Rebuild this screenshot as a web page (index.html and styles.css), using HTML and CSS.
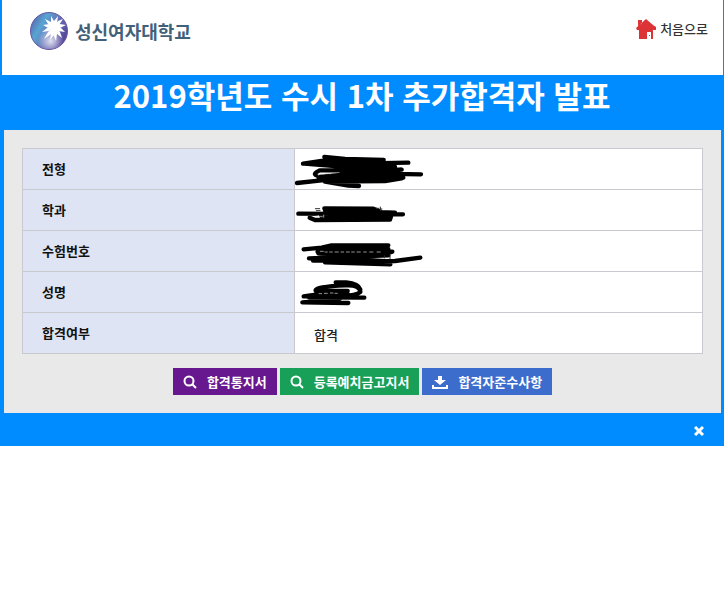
FILE: index.html
```html
<!DOCTYPE html>
<html lang="ko">

<head>
    <meta charset="UTF-8">
    <meta name="viewport" content="width=device-width, initial-scale=1.0">
    <title>2019학년도 수시 1차 추가합격자 발표</title>
    <link rel="stylesheet" href="styles.css">
</head>

<body>
    <div class="popup">
        <header class="header">
            <a href="#" class="logo">
                <svg class="logo-mark" viewBox="0 0 38 38" aria-hidden="true">
                    <defs>
                        <linearGradient id="ball" x1="0" y1="0.1" x2="1" y2="0.7">
                            <stop offset="0" stop-color="#5a58a8" />
                            <stop offset="0.32" stop-color="#58a5d2" />
                            <stop offset="0.6" stop-color="#6870b7" />
                            <stop offset="1" stop-color="#514096" />
                        </linearGradient>
                        <radialGradient id="shine" cx="0.55" cy="0.78" r="0.36">
                            <stop offset="0" stop-color="#fff" stop-opacity="0.8" />
                            <stop offset="1" stop-color="#fff" stop-opacity="0" />
                        </radialGradient>
                    </defs>
                    <circle cx="19" cy="19" r="18.5" fill="url(#ball)" stroke="#6455a0" />
                    <circle cx="19" cy="19" r="18" fill="url(#shine)" />
                    <path fill="#fff" d="M24 15l-3-5 0-6 3 5zM24 15l0-6 4-5-1 7zM24 15l4-6 5-2-4 6zM24 15l6-3 6 1-6 3zM24 15l7 1 4 4-7-1zM24 15l6 5 2 6-6-5zM24 15l3 7-1 7-3-7zM24 15l0 8-4 5 1-7zM24 15l-3 7-7 5 4-7zM24 15l-5 4-7 1 5-4zM24 15l-6 1-5-3 6-1zM24 15l-6-3-3-5 6 3z" />
                </svg>
                <span class="logo-text">성신여자대학교</span>
            </a>
            <a href="#" class="home">
                <svg class="home-icon" viewBox="0 0 20 20" aria-hidden="true">
                    <path fill="#dc3436" d="M10 0L0 9l1 2h2v9h8v-7h4v7h2v-9h3V8l-3-2-7-6zM2 1h4v3L2 7z" />
                    <path fill="#dc3436" d="M13 16h1v1h-1z" />
                </svg>
                <span>처음으로</span>
            </a>
        </header>

        <h1 class="title">2019학년도 수시 1차 추가합격자 발표</h1>

        <main class="panel">
            <table class="result">
                <tbody>
                    <tr>
                        <th scope="row">전형</th>
                        <td>
                            <svg class="mask" viewBox="30 12 450 123" aria-hidden="true">
                                <path d="M118 36L180 42L296 45M54 56L110 48L210 56L370 53M58 56L160 64L330 66M92 90Q84 86 104 76L350 74L100 96L355 98L170 84L408 88M36 114L130 104L240 96L350 100L300 108L120 110L190 122L222 123M140 112L310 102" />
                                <path class="gap" d="M100 90l6-3M110 87h8M122 86h6M132 86h5" />
                            </svg>
                        </td>
                    </tr>
                    <tr>
                        <th scope="row">학과</th>
                        <td>
                            <svg class="mask" viewBox="30 135 450 123" aria-hidden="true">
                                <path d="M118 190L265 191L285 199L120 196L330 203M40 206L354 208M74 218L90 225L315 224L318 214L110 214" />
                                <path class="trace" d="M91 191h13M94 197h11M274 190h7M286 186v11M286 192h5" />
                                <path class="gap" d="M92 214l9-2M106 215h6M116 210v7" />
                            </svg>
                        </td>
                    </tr>
                    <tr>
                        <th scope="row">수험번호</th>
                        <td>
                            <svg class="mask" viewBox="30 9 450 123" aria-hidden="true">
                                <path d="M56 64L110 59L140 52L310 52L130 60L310 63M98 72L110 66L322 71L300 78L100 76L310 82L72 91L210 90L84 98L230 96L120 103L316 109L290 100L330 99L406 89M220 94L310 100" />
                                <path class="gap" d="M106 70h9M120 72h7M134 72h8M150 72h10M168 72h8M184 72h9M200 72h8M216 72h10M236 72h8M254 72h10M276 72h10" />
                                <path class="trace" d="M298 84v6M315 82v10" />
                            </svg>
                        </td>
                    </tr>
                    <tr>
                        <th scope="row">성명</th>
                        <td>
                            <svg class="mask" viewBox="30 132 450 123" aria-hidden="true">
                                <path d="M92 188Q88 176 182 172Q226 170 226 192Q216 202 170 204L72 208L238 209M152 163L184 163Q220 166 226 184M92 188L188 189L76 202L56 205L188 198L160 214L52 223L190 225" />
                                <path class="gap" d="M102 197h8M118 196h9M136 195h8M150 196h7" />
                            </svg>
                        </td>
                    </tr>
                    <tr>
                        <th scope="row">합격여부</th>
                        <td>합격</td>
                    </tr>
                </tbody>
            </table>

            <div class="buttons">
                <button type="button" class="btn notice">
                    <svg class="btn-icon" viewBox="0 0 14 14" aria-hidden="true">
                        <circle cx="6" cy="6" r="4.5" />
                        <path d="M9 9l4 4" />
                    </svg>
                    합격통지서
                </button>
                <button type="button" class="btn bill">
                    <svg class="btn-icon" viewBox="0 0 14 14" aria-hidden="true">
                        <circle cx="6" cy="6" r="4.5" />
                        <path d="M9 9l4 4" />
                    </svg>
                    등록예치금고지서
                </button>
                <button type="button" class="btn guide">
                    <svg class="btn-icon wide" viewBox="0 0 16 14" aria-hidden="true">
                        <path class="solid" d="M6 1h4v4h4L8 10 2 5h4zM0 10h2v2h12v-2h2v4H0z" />
                    </svg>
                    합격자준수사항
                </button>
            </div>
        </main>

        <footer class="footer">
            <button type="button" class="close" aria-label="닫기">
                <svg class="close-icon" viewBox="0 0 10 10" aria-hidden="true">
                    <path d="M1 1l8 8M9 1L1 9" />
                </svg>
            </button>
        </footer>
    </div>
</body>

</html>
```

FILE: styles.css
```css
* {
    box-sizing: border-box;
}

body {
    margin: 0;
    background-color: #fff;
    font-family: "Noto Sans CJK KR", "Noto Sans", sans-serif;
    font-size: 13px;
    line-height: 20px;
}

.popup {
    background-color: #008cff;
}

.header {
    display: flex;
    justify-content: space-between;
    align-items: flex-start;
    height: 75px;
    margin: 0 1px 0 2px;
    padding: 12px 15px 0 28px;
    background-color: #fff;
}

.logo,
.home {
    display: flex;
    align-items: center;
    text-decoration: none;
}

.logo {
    gap: 7px;
    color: #426078;
    font-size: 18px;
    font-weight: bold;
}

.logo-mark {
    width: 38px;
    height: 38px;
}

.home {
    gap: 4px;
    padding-top: 7px;
    color: #333;
    font-weight: 500;
}

.home-icon {
    width: 20px;
    height: 20px;
}

.title {
    margin: 0;
    padding-bottom: 15px;
    color: #fff;
    font-size: 31px;
    font-weight: bold;
    line-height: 40px;
    text-align: center;
}

.panel {
    margin: 0 3px 0 4px;
    padding: 18px;
    background-color: #e9e9e9;
}

.result {
    width: 100%;
    border: 1px solid #b4b4bf;
    border-collapse: collapse;
    background-color: #fff;
}

.result th,
.result td {
    height: 41px;
    padding: 0 19px;
    border: 1px solid #c9cacf;
    text-align: left;
}

.result th {
    width: 40%;
    background-color: #dee4f3;
    color: #111;
    font-weight: bold;
}

.result td {
    position: relative;
    padding-top: 4px;
    color: #222;
    font-weight: 500;
}

/* pen strokes over the personal data */
.mask {
    position: absolute;
    top: 0;
    left: 0;
    width: 150px;
    height: 41px;
    overflow: visible;
    fill: none;
    stroke: #000;
    stroke-width: 13;
    stroke-linecap: round;
    stroke-linejoin: round;
}

.mask .gap {
    stroke: #ddd;
    stroke-width: 2;
}

.mask .trace {
    stroke: #333;
    stroke-width: 3;
}

.buttons {
    display: flex;
    justify-content: center;
    gap: 3px;
    margin-top: 14px;
}

.btn {
    display: flex;
    align-items: center;
    gap: 10px;
    height: 27px;
    padding: 0 10px;
    border: 0;
    color: #fff;
    font-family: inherit;
    font-size: 13px;
    font-weight: bold;
    cursor: pointer;
}

.notice {
    background-color: #67188f;
}

.bill {
    background-color: #18a058;
}

.guide {
    background-color: #3d6dcc;
}

.btn-icon {
    width: 14px;
    height: 14px;
    fill: none;
    stroke: #fff;
    stroke-width: 2;
}

.btn-icon.wide {
    width: 16px;
}

.btn-icon .solid {
    fill: #fff;
    stroke: none;
}

.footer {
    display: flex;
    justify-content: flex-end;
    align-items: center;
    height: 33px;
    padding: 2px 20px 0;
}

.close {
    display: flex;
    padding: 0;
    border: 0;
    background: none;
    cursor: pointer;
}

.close-icon {
    width: 10px;
    height: 10px;
    fill: none;
    stroke: #fff;
    stroke-width: 3;
}
```
